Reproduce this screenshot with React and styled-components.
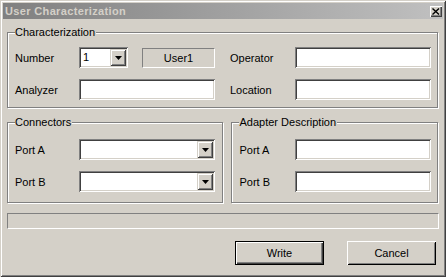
import React from "react";
import styled, { createGlobalStyle } from "styled-components";

const GlobalStyle = createGlobalStyle`
  html, body {
    margin: 0;
    padding: 0;
    background: #d4d0c8;
  }
  * {
    box-sizing: border-box;
  }
`;

const raised = `
  box-shadow: inset 1px 1px 0 #d4d0c8, inset -1px -1px 0 #404040,
    inset 2px 2px 0 #ffffff, inset -2px -2px 0 #808080;
`;

const sunken = `
  box-shadow: inset 1px 1px 0 #808080, inset -1px -1px 0 #ffffff,
    inset 2px 2px 0 #404040, inset -2px -2px 0 #d4d0c8;
`;

const Window = styled.div`
  width: 446px;
  height: 277px;
  padding: 3px;
  display: flex;
  flex-direction: column;
  background: #d4d0c8;
  font-family: "Liberation Sans", Arial, sans-serif;
  font-size: 11px;
  color: #000;
  ${raised}
`;

const TitleBar = styled.div`
  height: 16px;
  display: flex;
  align-items: center;
  justify-content: space-between;
  padding: 0 1px 0 2px;
  background: linear-gradient(to right, #808080, #c0c0c0);
`;

const Title = styled.span`
  font-weight: bold;
  font-size: 11px;
  color: #d4d0c8;
  letter-spacing: 0.35px;
`;

const CloseButton = styled.div`
  width: 12px;
  height: 11px;
  display: flex;
  align-items: center;
  justify-content: center;
  background: #d4d0c8;
  box-shadow: inset 1px 1px 0 #ffffff, inset -1px -1px 0 #404040,
    inset -2px -2px 0 #808080;
`;

const Content = styled.div`
  flex: 1;
  display: flex;
  flex-direction: column;
  padding: 7px 4px 0 4px;
`;

const Group = styled.fieldset`
  margin: 0 1px 0 0;
  min-width: 0;
  width: ${(p) => (p.$width ? `${p.$width}px` : "auto")};
  padding: ${(p) => p.$pad};
  border: 1px solid #808080;
  box-shadow: 1px 1px 0 #ffffff, inset 1px 1px 0 #ffffff;
`;

const Legend = styled.legend`
  padding: 0 1px 0 0;
  height: 13px;
  line-height: 13px;
  background: #d4d0c8;
`;

const FieldGrid = styled.div`
  display: grid;
  grid-template-columns: ${(p) => p.$cols};
  grid-auto-rows: 21px;
  row-gap: 11px;
  align-items: center;
`;

const Label = styled.span`
  line-height: 13px;
  padding-top: 1px;
`;

const TextBox = styled.div`
  width: 136px;
  height: 21px;
  background: #ffffff;
  ${sunken}
`;

const Combo = styled.div`
  width: ${(p) => p.$width}px;
  height: 21px;
  padding: 2px;
  display: flex;
  background: #ffffff;
  ${sunken}
`;

const ComboText = styled.span`
  flex: 1;
  padding-left: 2px;
  line-height: 17px;
`;

const DropButton = styled.div`
  width: 16px;
  height: 17px;
  display: flex;
  align-items: center;
  justify-content: center;
  background: #d4d0c8;
  ${raised}
`;

const NumberCell = styled.div`
  display: flex;
  align-items: center;
  gap: 14px;
`;

const StaticBox = styled.div`
  width: 73px;
  height: 20px;
  display: flex;
  align-items: center;
  justify-content: center;
  border-top: 1px solid #808080;
  border-left: 1px solid #808080;
  border-bottom: 1px solid #ffffff;
  border-right: 1px solid #ffffff;
`;

const LowerRow = styled.div`
  display: flex;
  gap: 7px;
  margin-top: 8px;
`;

const StatusBar = styled.div`
  height: 16px;
  margin-top: 10px;
  border-top: 1px solid #808080;
  border-left: 1px solid #808080;
  border-bottom: 1px solid #ffffff;
  border-right: 1px solid #ffffff;
`;

const ButtonRow = styled.div`
  display: flex;
  justify-content: flex-end;
  gap: 23px;
  margin-top: 12px;
  padding-right: 3px;
`;

const Button = styled.button`
  width: 89px;
  height: 24px;
  padding: 0;
  font-family: inherit;
  font-size: 11px;
  color: #000;
  background: #d4d0c8;
  border: ${(p) => (p.$default ? "1px solid #000" : "none")};
  box-shadow: ${(p) =>
    p.$default
      ? "inset 1px 1px 0 #ffffff, inset -1px -1px 0 #404040, inset -2px -2px 0 #808080"
      : "inset 1px 1px 0 #ffffff, inset -1px -1px 0 #000000, inset 2px 2px 0 #d4d0c8, inset -2px -2px 0 #808080"};
`;

const Arrow = () => (
  <svg width="7" height="4" viewBox="0 0 7 4">
    <polygon points="0,0 7,0 3.5,4" fill="#000" />
  </svg>
);

const CloseIcon = () => (
  <svg width="8" height="7" viewBox="0 0 8 7">
    <path d="M0.5 0.5 L7 6.5 M7 0.5 L0.5 6.5" stroke="#000" strokeWidth="1.4" />
  </svg>
);

const ComboBox = ({ width, value }) => (
  <Combo $width={width}>
    <ComboText>{value}</ComboText>
    <DropButton>
      <Arrow />
    </DropButton>
  </Combo>
);

export default function App() {
  return (
    <>
      <GlobalStyle />
      <Window>
        <TitleBar>
          <Title>User Characterization</Title>
          <CloseButton>
            <CloseIcon />
          </CloseButton>
        </TitleBar>
        <Content>
          <Group $pad="8px 6px 7px 7px">
            <Legend>Characterization</Legend>
            <FieldGrid $cols="64px 136px 15px 65px 136px">
              <Label>Number</Label>
              <NumberCell>
                <ComboBox width={49} value="1" />
                <StaticBox>User1</StaticBox>
              </NumberCell>
              <span />
              <Label>Operator</Label>
              <TextBox />
              <Label>Analyzer</Label>
              <TextBox />
              <span />
              <Label>Location</Label>
              <TextBox />
            </FieldGrid>
          </Group>
          <LowerRow>
            <Group $width={217} $pad="10px 8px 10px 7px">
              <Legend>Connectors</Legend>
              <FieldGrid $cols="64px 136px">
                <Label>Port A</Label>
                <ComboBox width={136} />
                <Label>Port B</Label>
                <ComboBox width={136} />
              </FieldGrid>
            </Group>
            <Group $width={207} $pad="10px 6px 10px 7px">
              <Legend>Adapter Description</Legend>
              <FieldGrid $cols="56px 136px">
                <Label>Port A</Label>
                <TextBox />
                <Label>Port B</Label>
                <TextBox />
              </FieldGrid>
            </Group>
          </LowerRow>
          <StatusBar />
          <ButtonRow>
            <Button $default>Write</Button>
            <Button>Cancel</Button>
          </ButtonRow>
        </Content>
      </Window>
    </>
  );
}
